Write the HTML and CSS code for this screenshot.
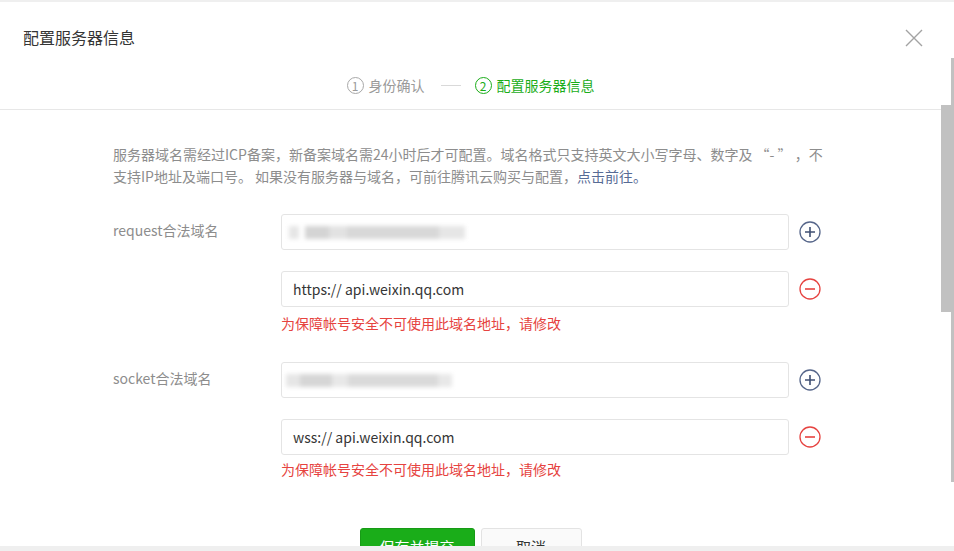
FILE: index.html
```html
<!DOCTYPE html>
<html lang="zh-CN">
<head>
    <meta charset="UTF-8">
    <title>配置服务器信息</title>
    <link rel="stylesheet" href="styles.css">
</head>
<body>

<div class="window">
    <div class="dialog">
        <div class="dialog-hd">
            <div class="hd-top">
                <h3 class="title">配置服务器信息</h3>
                <svg class="close" width="18" height="18" viewBox="0 0 18 18">
                    <path d="M1 1L17 17M17 1L1 17" stroke="#a3a3a3" stroke-width="1.4" fill="none"/>
                </svg>
            </div>
            <!-- 步骤条 -->
            <div class="steps">
                <div class="step"><span class="num">1</span>身份确认</div>
                <span class="step-line"></span>
                <div class="step current"><span class="num">2</span>配置服务器信息</div>
            </div>
        </div>

        <div class="dialog-bd">
            <p class="desc">服务器域名需经过ICP备案，新备案域名需24小时后才可配置。域名格式只支持英文大小写字母、数字及 “- ” ，不<br>支持IP地址及端口号。 如果没有服务器与域名，可前往腾讯云购买与配置，<a href="#">点击前往。</a></p>

            <div class="form-row">
                <label class="row-label">request合法域名</label>
                <div class="row-fields">
                    <div class="field">
                        <div class="input"><span class="masked masked-1"></span></div>
                        <svg class="op plus" width="22" height="22" viewBox="0 0 22 22">
                            <circle cx="11" cy="11" r="10" stroke="#56668a" stroke-width="1.3" fill="none"/>
                            <path d="M6 11H16M11 6V16" stroke="#3f4f73" stroke-width="1.6"/>
                        </svg>
                    </div>
                    <div class="field">
                        <div class="input">https:// api.weixin.qq.com</div>
                        <svg class="op minus" width="22" height="22" viewBox="0 0 22 22">
                            <circle cx="11" cy="11" r="10" stroke="#e64340" stroke-width="1.3" fill="none"/>
                            <path d="M6 11H16" stroke="#e64340" stroke-width="1.6"/>
                        </svg>
                    </div>
                    <p class="error">为保障帐号安全不可使用此域名地址，请修改</p>
                </div>
            </div>

            <div class="form-row">
                <label class="row-label">socket合法域名</label>
                <div class="row-fields">
                    <div class="field">
                        <div class="input"><span class="masked masked-2"></span></div>
                        <svg class="op plus" width="22" height="22" viewBox="0 0 22 22">
                            <circle cx="11" cy="11" r="10" stroke="#56668a" stroke-width="1.3" fill="none"/>
                            <path d="M6 11H16M11 6V16" stroke="#3f4f73" stroke-width="1.6"/>
                        </svg>
                    </div>
                    <div class="field">
                        <div class="input">wss:// api.weixin.qq.com</div>
                        <svg class="op minus" width="22" height="22" viewBox="0 0 22 22">
                            <circle cx="11" cy="11" r="10" stroke="#e64340" stroke-width="1.3" fill="none"/>
                            <path d="M6 11H16" stroke="#e64340" stroke-width="1.6"/>
                        </svg>
                    </div>
                    <p class="error">为保障帐号安全不可使用此域名地址，请修改</p>
                </div>
            </div>

            <div class="btn-area">
                <button class="btn btn-primary">保存并提交</button>
                <button class="btn btn-default">取消</button>
            </div>
        </div>
    </div>

    <!-- 滚动条 -->
    <div class="gutter">
        <span class="thumb-inner"></span>
        <span class="thumb-outer"></span>
    </div>
</div>

</body>
</html>
```

FILE: styles.css
```css
html, body {
    margin: 0;
    padding: 0;
    height: 551px;
    overflow: hidden;
}

body {
    background-color: #efefef;
    font-family: "Noto Sans CJK SC", "Liberation Sans", sans-serif;
    color: #353535;
}

.window {
    display: flex;
    margin-top: 2px;
    height: 544px;
    background-color: #fff;
    overflow: hidden;
}

.dialog {
    width: 941px;
    flex-shrink: 0;
    display: flex;
    flex-direction: column;
}

.dialog-hd {
    height: 107px;
    border-bottom: 1px solid #e7e7e7;
    flex-shrink: 0;
}

.hd-top {
    display: flex;
    justify-content: space-between;
    align-items: center;
    height: 24px;
    padding: 23px 18px 0 23px;
}

.title {
    margin: 0;
    font-size: 16px;
    font-weight: normal;
    color: #353535;
}

.close {
    margin-top: 1px;
}

/* 步骤 */
.steps {
    display: flex;
    justify-content: center;
    align-items: center;
    height: 24px;
    margin-top: 24px;
    font-size: 14px;
    color: #9a9a9a;
}

.step {
    display: flex;
    align-items: center;
}

.step .num {
    width: 15px;
    height: 15px;
    line-height: 15px;
    border: 1px solid #a8a8a8;
    border-radius: 50%;
    text-align: center;
    font-size: 12px;
    margin-right: 5px;
}

.step.current {
    color: #1aad19;
}

.step.current .num {
    border-color: #1aad19;
}

.step-line {
    width: 20px;
    height: 1px;
    background-color: #d9d9d9;
    margin: 0 14px 0 16px;
}

.dialog-bd {
    padding: 33px 0 0 113px;
}

.desc {
    margin: 0;
    font-size: 14px;
    line-height: 22px;
    color: #8d8d8d;
    white-space: nowrap;
}

.desc a {
    color: #576b95;
    text-decoration: none;
}

/* 表单行 */
.form-row {
    display: flex;
    margin-top: 27px;
}

.form-row + .form-row {
    margin-top: 28px;
}

.row-label {
    width: 168px;
    flex-shrink: 0;
    font-size: 14px;
    line-height: 32px;
    color: #8d8d8d;
}

.row-fields {
    display: flex;
    flex-direction: column;
    gap: 21px;
}

.field {
    display: flex;
    align-items: center;
}

.input {
    width: 508px;
    height: 36px;
    box-sizing: border-box;
    border: 1px solid #e4e4e4;
    border-radius: 3px;
    padding: 0 11px;
    font-size: 14px;
    line-height: 34px;
    color: #353535;
    display: flex;
    align-items: center;
    overflow: hidden;
}

.masked {
    display: block;
    height: 13px;
    filter: blur(2px);
}

.masked-1 {
    width: 176px;
    margin-left: -4px;
    background: linear-gradient(90deg, #e6e6e6 0, #e6e6e6 10px, #fff 10px, #fff 16px, #d4d4d4 16px, #d4d4d4 40px, #e2e2e2 40px, #e2e2e2 58px, #d8d8d8 58px, #d8d8d8 150px, #e6e6e6 150px, #e6e6e6 176px);
}

.masked-2 {
    width: 166px;
    margin-left: -7px;
    background: linear-gradient(90deg, #e6e6e6 0, #e6e6e6 14px, #d6d6d6 14px, #d6d6d6 46px, #e8e8e8 46px, #e8e8e8 62px, #dadada 62px, #dadada 152px, #e8e8e8 152px, #e8e8e8 166px);
}

.op {
    margin-left: 10px;
}

.error {
    margin: -16px 0 0;
    font-size: 14px;
    line-height: 22px;
    color: #e64340;
}

.form-row + .form-row .error {
    margin-top: -18px;
}

/* 按钮 */
.btn-area {
    display: flex;
    justify-content: center;
    gap: 6px;
    margin: 48px 0 0 -113px;
}

.btn {
    height: 36px;
    padding: 0;
    border-radius: 3px;
    font-family: "Noto Sans CJK SC", "Liberation Sans", sans-serif;
    font-size: 15px;
    cursor: pointer;
}

.btn-primary {
    width: 115px;
    background-color: #1aad19;
    border: 1px solid #179b16;
    color: #fff;
}

.btn-default {
    width: 101px;
    background-color: #fafafa;
    border: 1px solid #e3e3e3;
    color: #353535;
}

/* 右侧滚动条 */
.gutter {
    flex: 1;
    display: flex;
}

.thumb-inner {
    width: 10px;
    height: 207px;
    margin-top: 103px;
    background-color: #c1c1c1;
}

.thumb-outer {
    width: 3px;
    height: 424px;
    margin-top: 56px;
    background-color: #c1c1c1;
}
```
